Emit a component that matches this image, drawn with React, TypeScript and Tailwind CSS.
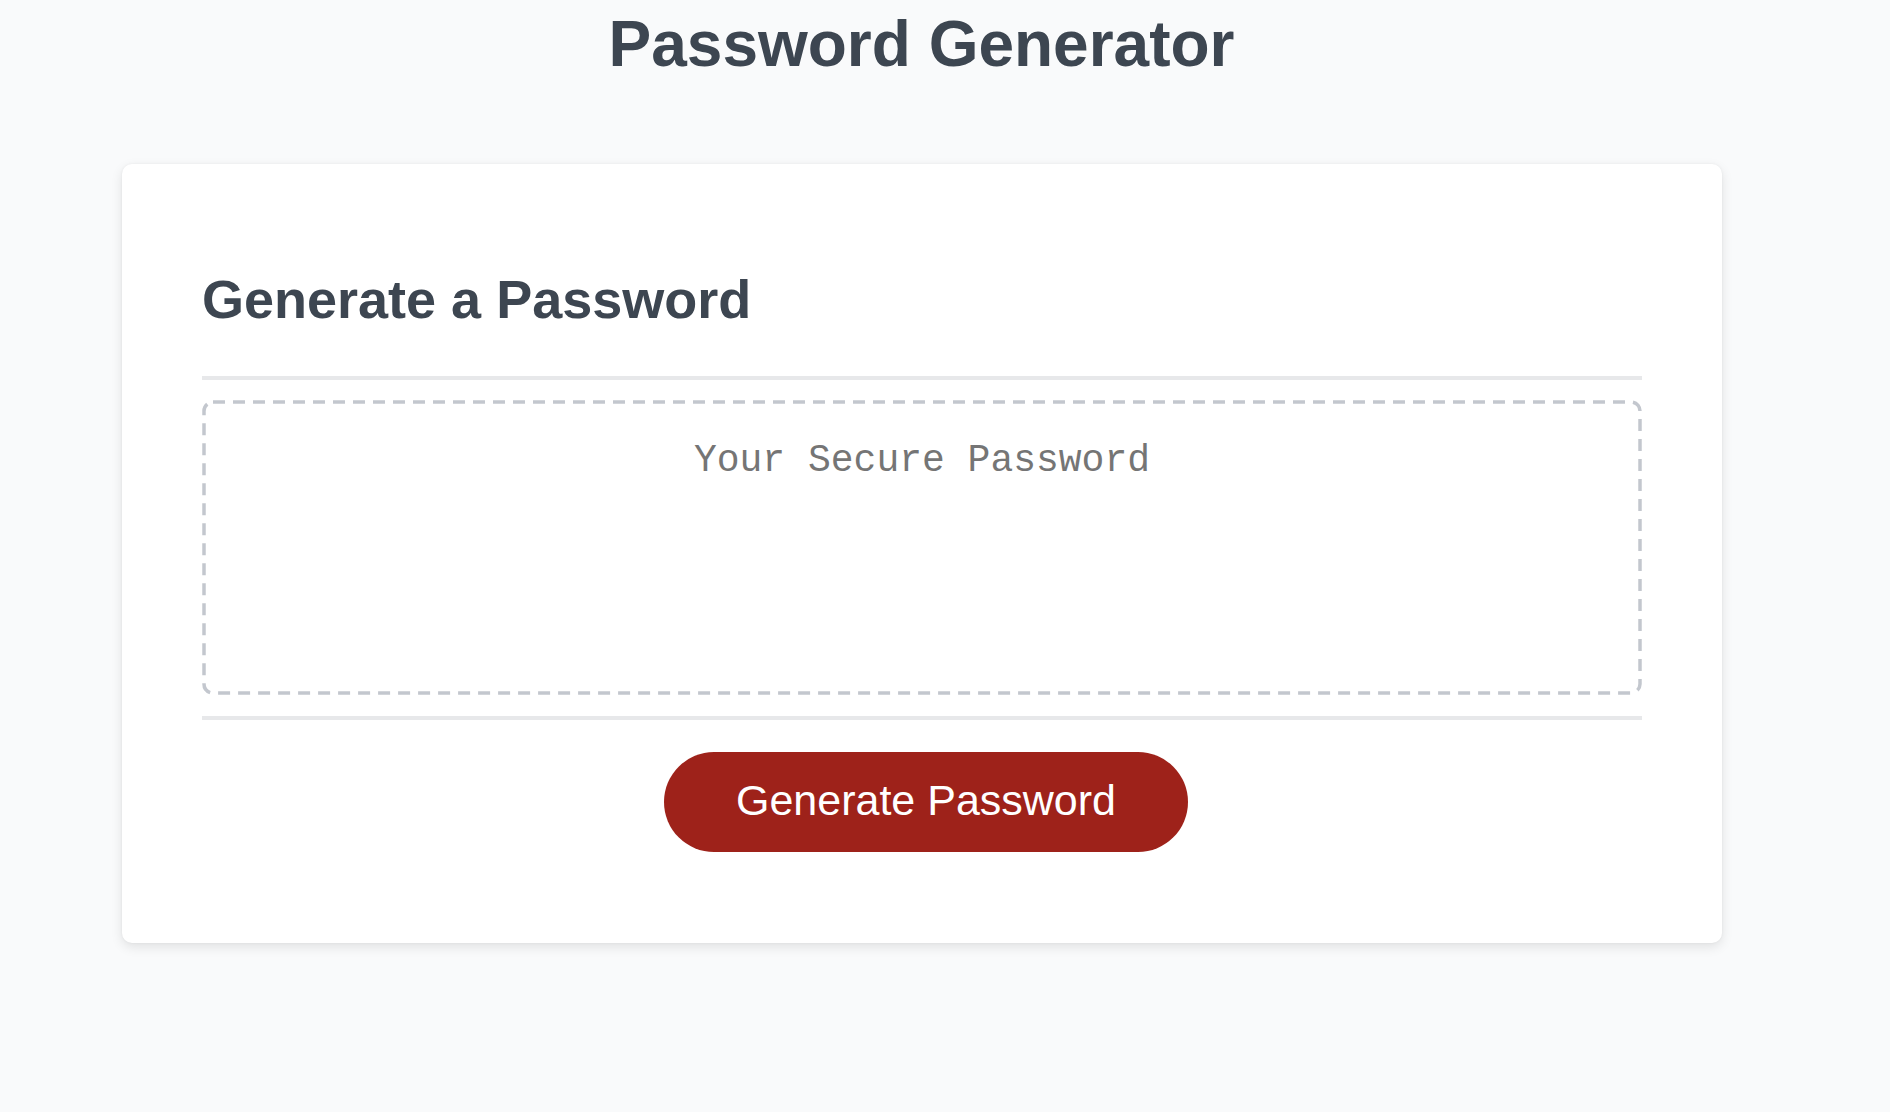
import React from "react";

export default function App() {
  return (
    <div className="min-h-[1112px] w-full bg-[#f9fafb]" style={{ fontFamily: '"Liberation Sans", Arial, Helvetica, sans-serif' }}>
      <div className="w-[1843px] pt-[7px] pb-[168px]">
        <h1 className="text-center text-[64px] leading-[74px] font-bold text-[#3d4651]">Password Generator</h1>
        <div className="mt-[83px] ml-[122px] w-[1600px] rounded-[10px] bg-white px-[80px] pt-[104px] pb-[91px] shadow-[0_4px_12px_rgba(0,0,0,0.1),0_0_3px_rgba(0,0,0,0.05)]">
          <h2 className="h-[62px] text-[54px] leading-[62px] font-bold text-[#3d4651]">Generate a Password</h2>
          <div className="mt-[46px] h-[4px] bg-[#e7e8ea]" />
          <div className="relative mt-[20px] h-[295px] rounded-[10px] pt-[39px] text-center">
            <svg className="pointer-events-none absolute inset-0 h-full w-full" width="1440" height="295" viewBox="0 0 1440 295" preserveAspectRatio="none">
              <rect x="2" y="2" width="1436" height="291" rx="9" ry="9" fill="none" stroke="#c3c7ce" strokeWidth="3.5" strokeDasharray="12 8" />
            </svg>
            <div
              className="relative text-[38px] leading-[44px] text-[#757575]"
              style={{ fontFamily: '"Liberation Mono", "Courier New", Courier, monospace' }}
            >
              Your Secure Password
            </div>
          </div>
          <div className="mt-[21px] h-[4px] bg-[#e7e8ea]" />
          <div className="mt-[32px] flex justify-center pl-[8px]">
            <button className="flex h-[100px] w-[524px] items-center justify-center rounded-full bg-[#9e221a] pb-[4px] text-[43px] leading-[50px] text-white">
              Generate Password
            </button>
          </div>
        </div>
      </div>
    </div>
  );
}
